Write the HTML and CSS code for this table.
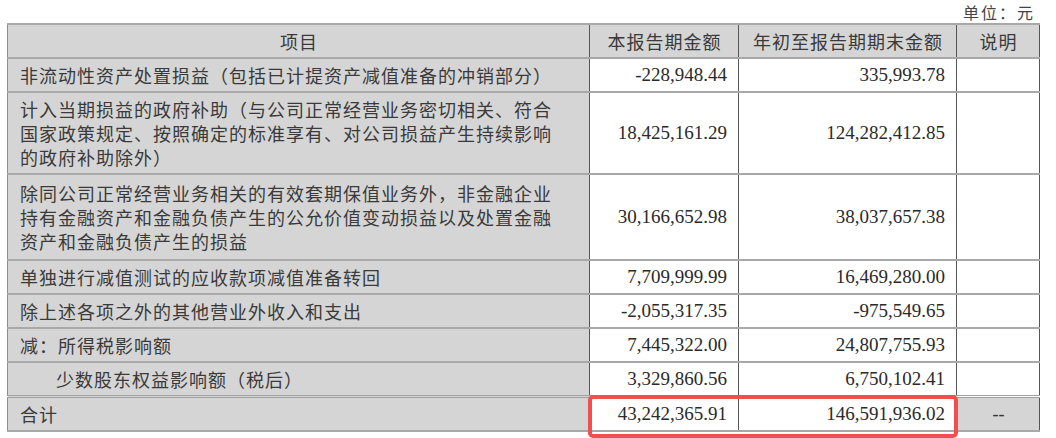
FILE: index.html
```
<!DOCTYPE html>
<html lang="zh-CN">
<head>
<meta charset="utf-8">
<link rel="stylesheet" href="styles.css">
</head>
<body>
<div class="page">
  <div class="unit">单位：元</div>
  <div class="wrap">
    <table class="tbl">
      <colgroup>
        <col class="c1"><col class="c2"><col class="c3"><col class="c4">
      </colgroup>
      <thead>
        <tr class="head">
          <th>项目</th>
          <th>本报告期金额</th>
          <th>年初至报告期期末金额</th>
          <th>说明</th>
        </tr>
      </thead>
      <tbody>
        <tr>
          <td class="item">非流动性资产处置损益（包括已计提资产减值准备的冲销部分）</td>
          <td class="num">-228,948.44</td>
          <td class="num">335,993.78</td>
          <td class="note"></td>
        </tr>
        <tr>
          <td class="item">计入当期损益的政府补助（与公司正常经营业务密切相关、符合国家政策规定、按照确定的标准享有、对公司损益产生持续影响的政府补助除外）</td>
          <td class="num">18,425,161.29</td>
          <td class="num">124,282,412.85</td>
          <td class="note"></td>
        </tr>
        <tr class="tall">
          <td class="item">除同公司正常经营业务相关的有效套期保值业务外，非金融企业持有金融资产和金融负债产生的公允价值变动损益以及处置金融资产和金融负债产生的损益</td>
          <td class="num">30,166,652.98</td>
          <td class="num">38,037,657.38</td>
          <td class="note"></td>
        </tr>
        <tr>
          <td class="item">单独进行减值测试的应收款项减值准备转回</td>
          <td class="num">7,709,999.99</td>
          <td class="num">16,469,280.00</td>
          <td class="note"></td>
        </tr>
        <tr>
          <td class="item">除上述各项之外的其他营业外收入和支出</td>
          <td class="num">-2,055,317.35</td>
          <td class="num">-975,549.65</td>
          <td class="note"></td>
        </tr>
        <tr>
          <td class="item">减：所得税影响额</td>
          <td class="num">7,445,322.00</td>
          <td class="num">24,807,755.93</td>
          <td class="note"></td>
        </tr>
        <tr>
          <td class="item indent">少数股东权益影响额（税后）</td>
          <td class="num">3,329,860.56</td>
          <td class="num">6,750,102.41</td>
          <td class="note"></td>
        </tr>
        <tr class="total">
          <td class="item">合计</td>
          <td class="num">43,242,365.91</td>
          <td class="num">146,591,936.02</td>
          <td class="note dash">--</td>
        </tr>
      </tbody>
    </table>
    <div class="highlight"></div>
  </div>
</div>
</body>
</html>
```
FILE: styles.css
```
html, body {
  margin: 0;
  padding: 0;
  background: #ffffff;
}
.page {
  width: 1056px;
  height: 438px;
  position: relative;
  font-family: "Noto Sans CJK SC", "Liberation Serif", serif;
  color: #3a3a3a;
}
.unit {
  height: 23px;
  line-height: 24px;
  font-size: 16px;
  text-align: right;
  padding-right: 21px;
  letter-spacing: 2px;
  color: #444;
}
.wrap {
  position: relative;
  margin-left: 7px;
  width: 1033px;
}
.tbl {
  border-collapse: collapse;
  table-layout: fixed;
  width: 1033px;
  border-left: 1px solid #8c8c8c;
  border-right: 1px solid #8c8c8c;
}
.c1 { width: 582px; }
.c2 { width: 149px; }
.c3 { width: 218px; }
.c4 { width: 83px; }
.tbl th, .tbl td {
  border-top: 2px solid #a8a8a8;
  border-bottom: 2px solid #a8a8a8;
  border-left: 1px solid #555;
  border-right: 1px solid #555;
  padding: 4px 11px 4px 12px;
  line-height: 24px;
  font-size: 18px;
  vertical-align: middle;
}
.tbl th {
  background: #d5d5d5;
  font-weight: normal;
  letter-spacing: 1px;
  text-align: center;
  height: 24px;
  color: #3a3a3a;
}
.tbl th:first-child, .tbl td.item {
  border-left: 1px solid #8c8c8c;
}
.tbl td.item {
  background: #d5d5d5;
  letter-spacing: 1px;
  height: 24px;
  padding-right: 24px;
}
.tall .item {
  padding-top: 6px;
  padding-bottom: 6px;
}
.tbl td.indent {
  padding-left: 48px;
}
.tbl td.num {
  background: #ffffff;
  text-align: right;
  font-family: "Liberation Serif", serif;
  font-size: 19px;
  color: #2a2a2a;
}
.note {
  background: #ffffff;
}
.tbl .total td {
  border-top: 3px double #a0a0a0;
}
.tbl .total td.dash {
  background: #d5d5d5;
  text-align: center;
  font-family: "Liberation Serif", serif;
  color: #333;
}
.highlight {
  position: absolute;
  left: 581px;
  top: 372px;
  width: 362px;
  height: 35px;
  border: 4px solid #f24e50;
  border-radius: 5px;
  pointer-events: none;
}
```
